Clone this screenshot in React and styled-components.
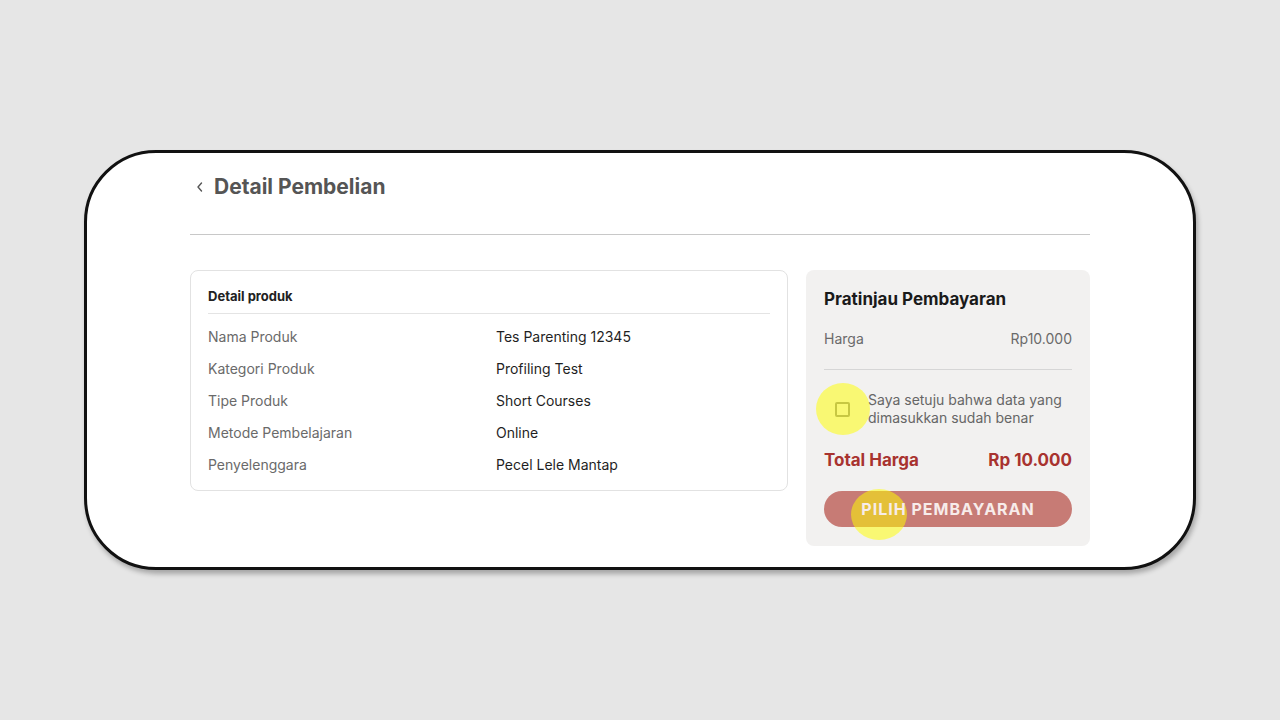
import React from "react";
import styled, { createGlobalStyle } from "styled-components";

const Global = createGlobalStyle`
  html, body { margin: 0; padding: 0; background: #e6e6e6; }
  body { font-family: Inter, "Noto Sans", "Liberation Sans", sans-serif; }
  * { box-sizing: border-box; }
`;

const Page = styled.div`
  width: 1280px;
  height: 720px;
  padding: 150px 0 0 84px;
`;

const Frame = styled.div`
  width: 1112px;
  height: 420px;
  background: #fff;
  border: 3px solid #111;
  border-radius: 72px;
  box-shadow: 2px 4px 5px rgba(0, 0, 0, 0.28);
  padding: 20px 0 0 103px;
`;

const Content = styled.div`
  width: 900px;
  display: flex;
  flex-direction: column;
`;

const Header = styled.div`
  display: flex;
  align-items: center;
  gap: 9px;
  height: 28px;
  padding-left: 5px;
  color: #555;
`;

const Title = styled.h1`
  margin: 0;
  font-size: 21px;
  font-weight: 700;
  line-height: 28px;
  color: #555;
`;

const Rule = styled.div`
  height: 1px;
  background: ${(p) => p.$color || "#cfcfcf"};
  margin: ${(p) => p.$margin || "0"};
`;

const Columns = styled.div`
  display: grid;
  grid-template-columns: 598px 284px;
  gap: 18px;
  align-items: start;
`;

const ProductCard = styled.section`
  border: 1px solid #e2e2e2;
  border-radius: 8px;
  padding: 15px 17px 15px 17px;
`;

const CardHeading = styled.div`
  font-size: 13px;
  font-weight: 700;
  line-height: 20px;
  color: #222;
`;

const DetailList = styled.div`
  display: flex;
  flex-direction: column;
  gap: 12px;
`;

const DetailRow = styled.div`
  display: grid;
  grid-template-columns: 288px 1fr;
  font-size: 14px;
  line-height: 20px;
`;

const Label = styled.span`
  color: #6a6a6a;
`;

const Value = styled.span`
  color: #1f1f1f;
`;

const SummaryCard = styled.section`
  background: #f2f1f0;
  border-radius: 8px;
  padding: 17px 18px 19px;
  display: flex;
  flex-direction: column;
`;

const SummaryTitle = styled.h2`
  margin: 0;
  font-size: 17px;
  font-weight: 700;
  line-height: 24px;
  color: #1a1a1a;
`;

const PriceRow = styled.div`
  display: flex;
  justify-content: space-between;
  font-size: 14px;
  line-height: 20px;
  color: #6a6a6a;
  margin-top: 18px;
`;

const AgreeRow = styled.label`
  display: flex;
  align-items: center;
  font-size: 14px;
  line-height: 18px;
  color: #666;
`;

const CheckWrap = styled.span`
  position: relative;
  width: 44px;
  flex: none;
  display: flex;
  justify-content: center;
  padding-right: 7px;
`;

const Check = styled.span`
  width: 15px;
  height: 15px;
  border: 2px solid #8a8a8a;
  border-radius: 2px;
  background: transparent;
`;

const Highlight = styled.span`
  position: absolute;
  left: 50%;
  top: 50%;
  width: ${(p) => p.$w}px;
  height: ${(p) => p.$h}px;
  margin-left: ${(p) => -p.$w / 2 + (p.$dx || 0)}px;
  margin-top: ${(p) => -p.$h / 2 + (p.$dy || 0)}px;
  border-radius: 50%;
  background: rgba(255, 255, 0, 0.52);
  pointer-events: none;
`;

const TotalRow = styled.div`
  display: flex;
  justify-content: space-between;
  font-size: 17px;
  font-weight: 700;
  line-height: 24px;
  color: #a8332f;
  margin-top: 21px;
`;

const PayButton = styled.button`
  position: relative;
  margin-top: 19px;
  height: 36px;
  border: none;
  border-radius: 18px;
  background: #c77b75;
  color: #f7ecea;
  font-family: inherit;
  font-size: 16px;
  font-weight: 700;
  letter-spacing: 1px;
  cursor: not-allowed;
  overflow: visible;
`;

const ButtonLabel = styled.span`
  position: relative;
`;

const BtnHighlight = styled.span`
  position: absolute;
  left: 27px;
  top: -2px;
  width: 56px;
  height: 51px;
  border-radius: 50%;
  background: rgba(255, 255, 0, 0.52);
  pointer-events: none;
`;

const ChevronLeft = () => (
  <svg width="10" height="12" viewBox="0 0 10 12" fill="none">
    <path d="M6.5 2 L3 6 L6.5 10" stroke="#555" strokeWidth="1.4" strokeLinecap="round" strokeLinejoin="round" />
  </svg>
);

const details = [
  ["Nama Produk", "Tes Parenting 12345"],
  ["Kategori Produk", "Profiling Test"],
  ["Tipe Produk", "Short Courses"],
  ["Metode Pembelajaran", "Online"],
  ["Penyelenggara", "Pecel Lele Mantap"],
];

export default function App() {
  return (
    <>
      <Global />
      <Page>
        <Frame>
          <Content>
            <Header>
              <ChevronLeft />
              <Title>Detail Pembelian</Title>
            </Header>
            <Rule $margin="33px 0 35px" $color="#c8c8c8" />
            <Columns>
              <ProductCard>
                <CardHeading>Detail produk</CardHeading>
                <Rule $margin="7px 0 13px" $color="#e4e4e4" />
                <DetailList>
                  {details.map(([l, v]) => (
                    <DetailRow key={l}>
                      <Label>{l}</Label>
                      <Value>{v}</Value>
                    </DetailRow>
                  ))}
                </DetailList>
              </ProductCard>
              <SummaryCard>
                <SummaryTitle>Pratinjau Pembayaran</SummaryTitle>
                <PriceRow>
                  <span>Harga</span>
                  <span>Rp10.000</span>
                </PriceRow>
                <Rule $margin="20px 0 21px" $color="#d6d6d6" />
                <AgreeRow>
                  <CheckWrap>
                    <Check />
                    <Highlight $w={54} $h={52} $dx={-3} />
                  </CheckWrap>
                  <span>Saya setuju bahwa data yang dimasukkan sudah benar</span>
                </AgreeRow>
                <TotalRow>
                  <span>Total Harga</span>
                  <span>Rp 10.000</span>
                </TotalRow>
                <PayButton disabled>
                  <BtnHighlight />
                  <ButtonLabel>PILIH PEMBAYARAN</ButtonLabel>
                </PayButton>
              </SummaryCard>
            </Columns>
          </Content>
        </Frame>
      </Page>
    </>
  );
}
